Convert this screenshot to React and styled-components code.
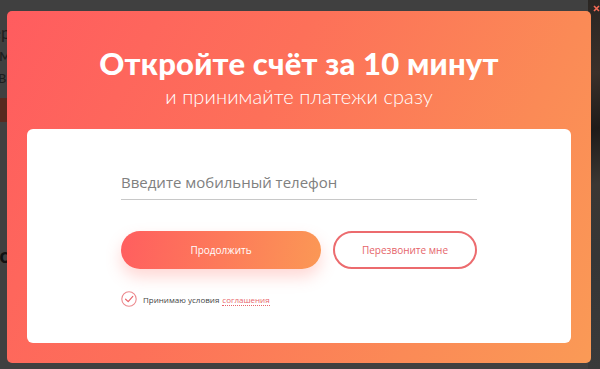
import React from "react";
import styled, { createGlobalStyle } from "styled-components";

const Global = createGlobalStyle`
  html, body { margin: 0; padding: 0; width: 600px; height: 369px; overflow: hidden; background: #3f3f3f; }
  * { box-sizing: border-box; }
  body { font-family: "Lato", "Noto Sans", sans-serif; }
`;

const Page = styled.div`
  position: relative;
  width: 600px;
  height: 369px;
  background: #404040;
  overflow: hidden;
`;

const BackText = styled.div`
  display: flex;
  flex-direction: column;
  padding: 22px 0 0 0;
  color: #1e1e1e;
  font-size: 17px;
  line-height: 22px;
  font-family: "Lato", sans-serif;
`;

const BackLine = styled.div`
  white-space: nowrap;
  margin-left: ${(p) => p.$shift || 0}px;
`;

const BackBand = styled.div`
  height: 24px;
  margin-top: 10px;
  background: #57291f;
`;

const BackBold = styled.div`
  margin-top: 122px;
  font-weight: 900;
  font-size: 20px;
  margin-left: -12px;
  color: #111;
`;

const RightImage = styled.div`
  position: absolute;
  top: 0;
  right: 0;
  width: 12px;
  height: 369px;
  background: linear-gradient(170deg, #2a2623 0%, #3a302a 20%, #1e1b19 35%, #3b3733 50%, #363636 70%, #3a3a3a 100%);
`;

const Close = styled.div`
  position: absolute;
  top: 0;
  right: 0;
  width: 9px;
  height: 11px;
`;

const Overlay = styled.div`
  position: absolute;
  inset: 0;
  padding: 11px 9px 6px 7px;
  display: flex;
`;

const Modal = styled.div`
  flex: 1;
  border-radius: 5px;
  background: linear-gradient(118deg, #ff5c5f 0%, #fd7059 40%, #fb8a56 75%, #fa9a56 100%);
  display: flex;
  flex-direction: column;
  align-items: center;
  padding: 34px 20px 20px;
`;

const Title = styled.h1`
  margin: 0;
  color: #fff;
  font-family: "Lato", sans-serif;
  font-weight: 900;
  font-size: 31px;
  line-height: 36px;
  letter-spacing: 0.2px;
`;

const Subtitle = styled.div`
  color: #fff;
  font-family: "Lato", sans-serif;
  font-weight: 300;
  font-size: 20px;
  line-height: 24px;
  letter-spacing: 0.1px;
  margin-top: 3px;
`;

const Card = styled.div`
  align-self: stretch;
  flex: 1;
  margin-top: 21px;
  background: #fff;
  border-radius: 6px;
  padding: 43px 94px 0;
  display: flex;
  flex-direction: column;
`;

const Field = styled.div`
  border-bottom: 1px solid #c8c8c8;
  padding-bottom: 6px;
  color: #808080;
  font-family: "Open Sans", sans-serif;
  font-size: 15px;
  line-height: 21px;
`;

const Buttons = styled.div`
  display: flex;
  gap: 12px;
  margin-top: 31px;
`;

const Primary = styled.div`
  width: 200px;
  height: 38px;
  border-radius: 19px;
  background: linear-gradient(100deg, #ff5e5f 0%, #fd7a5a 50%, #fb9855 100%);
  box-shadow: 0 8px 16px rgba(255, 110, 100, 0.28);
  display: flex;
  align-items: center;
  justify-content: center;
  color: #fff;
  font-family: "Open Sans", sans-serif;
  font-size: 10px;
`;

const Secondary = styled.div`
  flex: 1;
  height: 38px;
  border-radius: 19px;
  border: 2px solid #ec6b6e;
  display: flex;
  align-items: center;
  justify-content: center;
  color: #e5646a;
  font-family: "Open Sans", sans-serif;
  font-size: 10px;
`;

const Agree = styled.div`
  display: flex;
  align-items: center;
  gap: 6px;
  margin-top: 22px;
  font-family: "Open Sans", sans-serif;
  font-size: 8px;
  color: #444;
`;

const Link = styled.span`
  color: #e8656b;
  border-bottom: 1px dotted #e8656b;
  margin-left: 3px;
`;

const Check = () => (
  <svg width="16" height="16" viewBox="0 0 16 16">
    <circle cx="8" cy="8" r="7.2" fill="none" stroke="#ec8a8e" strokeWidth="1.1" />
    <path d="M4.6 8.2 L7.2 10.6 L11.8 5.4" fill="none" stroke="#e8656b" strokeWidth="1.2" strokeLinecap="round" strokeLinejoin="round" />
  </svg>
);

export default function App() {
  return (
    <Page>
      <Global />
      <BackText>
        <BackLine $shift={-8}>ер</BackLine>
        <BackLine $shift={-1}>м</BackLine>
        <BackLine $shift={-2}>в</BackLine>
        <BackBand />
        <BackBold>ос</BackBold>
      </BackText>
      <RightImage />
      <Close>
        <svg width="9" height="11" viewBox="0 0 9 11">
          <path d="M3 1 L8 6 M8 1 L3 6" stroke="#f46a55" strokeWidth="1.6" />
        </svg>
      </Close>
      <Overlay>
        <Modal>
          <Title>Откройте счёт за 10 минут</Title>
          <Subtitle>и принимайте платежи сразу</Subtitle>
          <Card>
            <Field>Введите мобильный телефон</Field>
            <Buttons>
              <Primary>Продолжить</Primary>
              <Secondary>Перезвоните мне</Secondary>
            </Buttons>
            <Agree>
              <Check />
              <span>
                Принимаю условия<Link>соглашения</Link>
              </span>
            </Agree>
          </Card>
        </Modal>
      </Overlay>
    </Page>
  );
}
